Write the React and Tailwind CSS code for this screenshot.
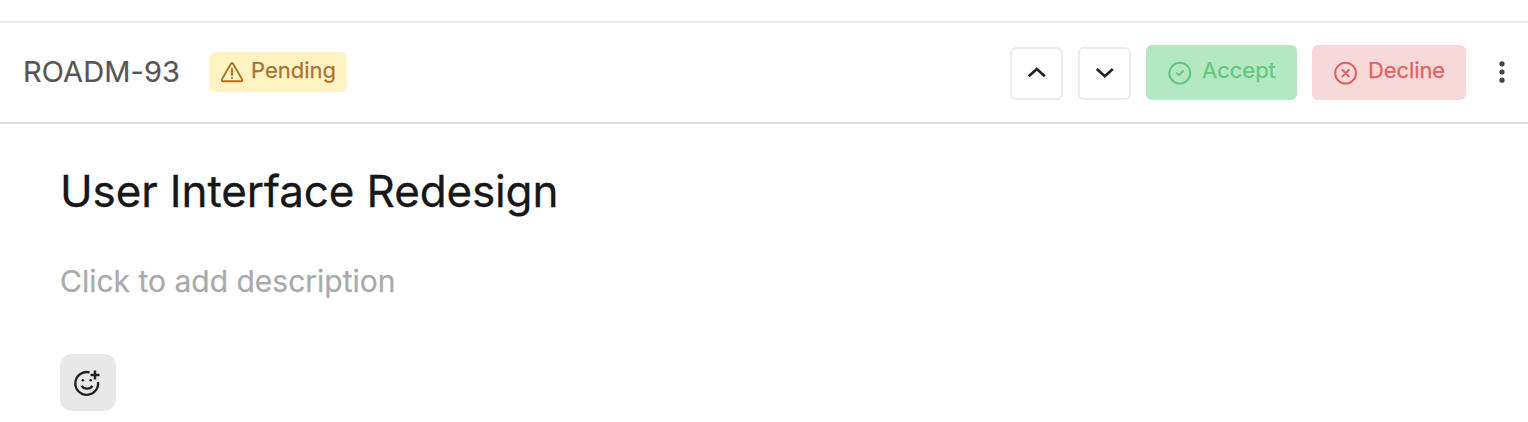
function WarningIcon() {
  return (
    <svg className="block h-6 w-6 shrink-0" viewBox="0 0 24 24" fill="none" stroke="#b0711f" strokeWidth="1.9" strokeLinecap="round" strokeLinejoin="round">
      <path d="M10.9 3.7 1.9 19.4a1.3 1.3 0 0 0 1.1 1.9h18a1.3 1.3 0 0 0 1.1-1.9L13.1 3.7a1.3 1.3 0 0 0-2.2 0Z" />
      <path d="M12 9v6" />
      <path d="M12 17.6v.3" />
    </svg>
  );
}

function AcceptIcon() {
  return (
    <svg className="block h-6 w-6 shrink-0" viewBox="0 0 24 24" fill="none" stroke="#63c67f" strokeWidth="2" strokeLinecap="round" strokeLinejoin="round">
      <circle cx="11.8" cy="12.2" r="10.4" />
      <path d="m8.9 12.2 2.1 2 4-4.2" />
    </svg>
  );
}

function DeclineIcon() {
  return (
    <svg className="block h-6 w-6 shrink-0" viewBox="0 0 24 24" fill="none" stroke="#e26060" strokeWidth="2" strokeLinecap="round" strokeLinejoin="round">
      <circle cx="11.6" cy="12.2" r="10.4" />
      <path d="m8.4 9 6.4 6.4M14.8 9l-6.4 6.4" />
    </svg>
  );
}

function Chevron({ d, label }) {
  return (
    <button aria-label={label} className="flex h-[53px] w-[53px] items-center justify-center rounded-md border-2 border-[#ececec] bg-white">
      <svg className="block h-6 w-6" viewBox="0 0 24 24" fill="none" stroke="#252525" strokeWidth="2.7">
        <path d={d} />
      </svg>
    </button>
  );
}

function ReactionIcon() {
  return (
    <svg className="block h-7 w-7" viewBox="0 0 28 28" fill="none" stroke="#222" strokeWidth="2.3">
      <path d="M16.6 3.4A11.4 11.4 0 1 0 25 12.8" />
      <path d="M22 1.6v9M17.5 6.1h9" strokeWidth="2.5" />
      <path d="M8.7 16.7c2 3.9 8.7 3.9 10.7 0" strokeWidth="2.4" />
      <circle cx="9.9" cy="11.2" r="1.3" fill="#222" stroke="none" />
      <circle cx="17.7" cy="11.2" r="1.3" fill="#222" stroke="none" />
    </svg>
  );
}

export default function App() {
  return (
    <div className="h-[422px] w-[1528px] overflow-hidden bg-white pt-[21px] font-['Inter',sans-serif]">
      <header className="flex h-[103px] items-center justify-between border-y-2 border-t-[#e9e9e9] border-b-[#dedede] pr-[17px] pl-[23px]">
        <div className="flex items-center pb-[2px]">
          <span className="w-[186px] text-[29px] leading-9 tracking-[0.1px] whitespace-nowrap text-[#565656] [-webkit-text-stroke:0.2px]">ROADM-93</span>
          <span className="flex h-10 w-[138px] items-center rounded-md bg-[#fef4c3] pt-px pl-[11px]">
            <WarningIcon />
            <span className="ml-[7px] -mt-[4px] text-[22px] leading-7 whitespace-nowrap text-[#ab7234] [-webkit-text-stroke:0.25px]">Pending</span>
          </span>
        </div>
        <div className="flex items-center">
          <div className="mr-[15px] flex gap-[15px] pt-[2px]">
            <Chevron label="Previous" d="m3.8 14.3 8-7.3 8 7.3" />
            <Chevron label="Next" d="m3.8 6.9 8 7.3 8-7.3" />
          </div>
          <button className="mr-[15px] flex h-[55px] w-[151px] items-center rounded-md bg-[#b4e8c2] pl-[22px]">
            <AcceptIcon />
            <span className="ml-[10px] -mt-[5px] text-[22px] leading-7 whitespace-nowrap text-[#66c77e] [-webkit-text-stroke:0.25px]">Accept</span>
          </button>
          <button className="flex h-[55px] w-[154px] items-center rounded-md bg-[#f7d9da] pl-[22px]">
            <DeclineIcon />
            <span className="ml-[10px] -mt-[5px] text-[22px] leading-7 tracking-[-0.1px] whitespace-nowrap text-[#e26262] [-webkit-text-stroke:0.25px]">Decline</span>
          </button>
          <button aria-label="More" className="ml-[27px] -mt-[2px]">
            <svg className="block h-6 w-[18px]" viewBox="0 0 18 24" fill="#444">
              <circle cx="9" cy="3.8" r="2.6" />
              <circle cx="9" cy="12" r="2.6" />
              <circle cx="9" cy="20.2" r="2.6" />
            </svg>
          </button>
        </div>
      </header>
      <main className="flex flex-col items-start pt-[39px] pl-[60px]">
        <h1 className="text-[44px] leading-[56px] tracking-[-0.14px] whitespace-nowrap text-[#171717] [-webkit-text-stroke:0.3px]">User Interface Redesign</h1>
        <p className="mt-[42px] text-[30px] leading-10 whitespace-nowrap text-[#aaaaaa] [-webkit-text-stroke:0.25px]">Click to add description</p>
        <button aria-label="Add reaction" className="mt-[53px] flex h-[57px] w-[56px] items-center justify-center rounded-xl bg-[#e8e8e8] pr-[2px]">
          <ReactionIcon />
        </button>
      </main>
    </div>
  );
}
